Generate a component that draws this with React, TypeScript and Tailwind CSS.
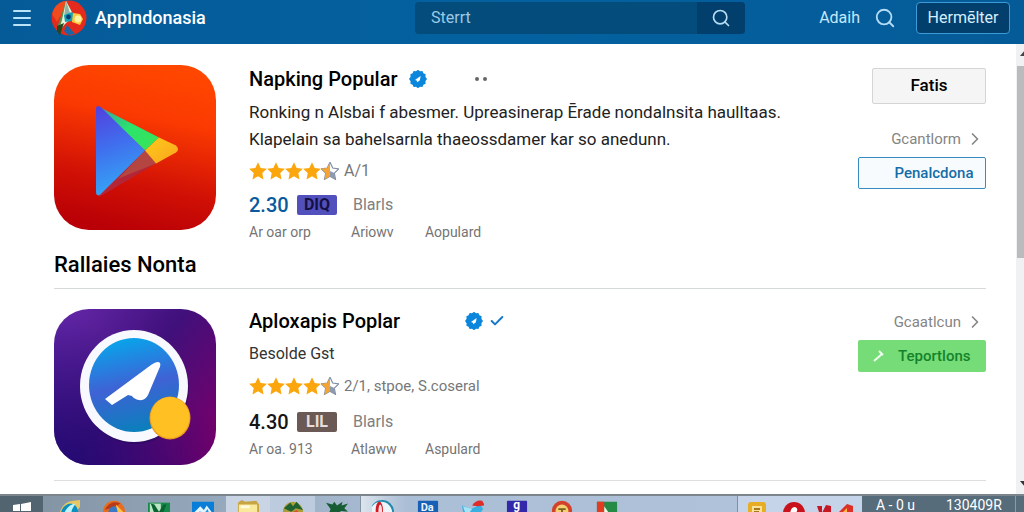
import type { ReactNode } from "react"
import { Check, ChevronRight, Menu, Search } from "lucide-react"

const STAR =
  "M10 1.2l2.7 5.8 6.2.8-4.6 4.3 1.2 6.3L10 15.3l-5.5 3.1 1.2-6.3L1.1 7.8l6.2-.8z"

function Stars() {
  return (
    <div className="flex" role="img" aria-label="4.5">
      {[0, 1, 2, 3].map((i) => (
        <svg key={i} viewBox="1 1 18 18" className="h-[18px] w-[18px]">
          <path d={STAR} fill="#fba60c" />
        </svg>
      ))}
      <svg viewBox="1 1 18 18" className="h-[18px] w-[18px]">
        <path d={STAR} fill="#fff" stroke="#8290a3" strokeWidth="1.2" />
        <path
          d="M10 1.2v14.1l-5.5 3.1 1.2-6.3L1.1 7.8l6.2-.8z"
          fill="#f5a332"
        />
        <path d="M10 10l4.3 2.1 1.2 6.3L10 15.3z" fill="#8d9ab0" />
      </svg>
    </div>
  )
}

function VerifiedBadge() {
  return (
    <svg viewBox="1 1 18 18" className="h-[18px] w-[18px]">
      <path
        d="M10 .8l2 1.4 2.4-.2 1 2.2 2.2 1-.2 2.5L19 10l-1.6 2.3.2 2.5-2.2 1-1 2.2-2.4-.2-2 1.4-2-1.4-2.4.2-1-2.2-2.2-1 .2-2.5L1 10l1.6-2.3-.2-2.5 2.200-1 1-2.2 2.4.2z"
        fill="#0b86dd"
      />
      <path d="M7 11l5.600-4-.7 4.200-2.500 2-.8-1.600z" fill="#fff" />
    </svg>
  )
}

function LogoMark() {
  return (
    <svg viewBox="0 0 36 36" className="h-9 w-9">
      <circle cx="18" cy="18" r="17.5" fill="#e32a1c" />
      <path d="M1 14a17.500 17.500 0 0 1 12-13l4 1-11 20z" fill="#f04a1f" />
      <path d="M15 1l5 10-6 9-8 14 1-9z" fill="#5b8f4a" />
      <path d="M15 1l8 15-9 8-7 9 4-13z" fill="#e9f2dc" />
      <path d="M15 1l4 12-6 5z" fill="#8fb3a5" />
      <path d="M13 15l8-3 3 4-3 5-7 1z" fill="#12a4b4" />
      <circle cx="17.500" cy="17" r="2.400" fill="#063f77" />
      <path d="M22 13l7 1 3 5-3 6-8-3z" fill="#ffc83a" />
      <circle cx="27" cy="19" r="3.400" fill="#fff2a0" />
      <path d="M6 26l7-3-4 12-3-3z" fill="#24491f" />
      <path d="M16 25l8 9-7 1-4-4z" fill="#1766a5" />
    </svg>
  )
}

function PlayArtwork() {
  return (
    <svg
      viewBox="0 0 162 164"
      preserveAspectRatio="none"
      className="h-[165px] w-[162px] shrink-0"
    >
      <defs>
        <linearGradient id="play-bg" x1=".6" y1="0" x2=".4" y2="1">
          <stop offset="0" stopColor="#ff4700" />
          <stop offset=".3" stopColor="#fb3a02" />
          <stop offset=".72" stopColor="#d01005" />
          <stop offset="1" stopColor="#b90006" />
        </linearGradient>
        <linearGradient id="play-blue" x1="0" y1="0" x2=".2" y2="1">
          <stop offset="0" stopColor="#533fdd" />
          <stop offset=".5" stopColor="#3f70ee" />
          <stop offset="1" stopColor="#35a5f5" />
        </linearGradient>
        <linearGradient id="play-green" x1="0" y1="0" x2="1" y2="1">
          <stop offset="0" stopColor="#3e9aa8" />
          <stop offset=".5" stopColor="#2be36d" />
          <stop offset="1" stopColor="#3be453" />
        </linearGradient>
        <linearGradient id="play-yellow" x1="0" y1="0" x2="1" y2="1">
          <stop offset="0" stopColor="#ffca1c" />
          <stop offset="1" stopColor="#f9a51c" />
        </linearGradient>
      </defs>
      <rect width="162" height="164" rx="35" fill="url(#play-bg)" />
      <path d="M44 41l61 31-14 13z" fill="url(#play-green)" />
      <path d="M44 130l47-46 11 14-53 31q-4 3-5 1z" fill="#b42537" />
      <path d="M64 113l27-28 11 13z" fill="#b54540" />
      <path
        d="M42 44q0-5 5-2l44 43-45 44q-4 2-4-3z"
        fill="url(#play-blue)"
      />
      <path
        d="M105 72l17 8q4 4 0 7l-20 11-11-13z"
        fill="url(#play-yellow)"
      />
    </svg>
  )
}

function PlaneArtwork() {
  return (
    <svg
      viewBox="0 0 162 156"
      preserveAspectRatio="none"
      className="h-[156px] w-[162px] shrink-0"
    >
      <defs>
        <linearGradient id="plane-bg" x1="0" y1=".1" x2="1" y2=".8">
          <stop offset="0" stopColor="#6527a9" />
          <stop offset=".5" stopColor="#40107b" />
          <stop offset="1" stopColor="#75006b" />
        </linearGradient>
        <linearGradient id="plane-shade" x1=".6" y1=".4" x2=".1" y2="1">
          <stop offset="0" stopColor="#1e0870" stopOpacity="0" />
          <stop offset="1" stopColor="#1e0870" stopOpacity=".8" />
        </linearGradient>
        <linearGradient id="plane-disc" x1=".4" y1="0" x2=".6" y2="1">
          <stop offset="0" stopColor="#08a4ea" />
          <stop offset=".5" stopColor="#3f62d5" />
          <stop offset="1" stopColor="#0880bb" />
        </linearGradient>
      </defs>
      <rect width="162" height="156" rx="35" fill="url(#plane-bg)" />
      <rect width="162" height="156" rx="35" fill="url(#plane-shade)" />
      <ellipse cx="81" cy="79" rx="54" ry="56" fill="#24095a" opacity=".5" />
      <ellipse cx="80" cy="77" rx="54" ry="56" fill="#f8f9ff" />
      <ellipse cx="80" cy="76" rx="45" ry="47" fill="url(#plane-disc)" />
      <path
        d="M51 90l46-34q7-5 9-2 1 2-1 6L94 86q-3 6-9 5-5-1-7-4l-4-1-16 10z"
        fill="#fff"
      />
      <ellipse cx="116" cy="109" rx="20.500" ry="21.500" fill="#ed9b20" />
      <ellipse cx="116" cy="108.500" rx="19.500" ry="20.500" fill="#ffc024" />
    </svg>
  )
}

interface ScoreProps {
  value: string
  tag: string
  label: string
  meta: string[]
  valueColor: string
  tagColor: string
}

function Score({ value, tag, label, meta, valueColor, tagColor }: ScoreProps) {
  return (
    <>
      <div className="flex h-6 items-center">
        <span className={`w-12 text-xl font-medium ${valueColor}`}>
          {value}
        </span>
        <span
          className={`flex h-5 w-10 items-center justify-center rounded-xs text-base font-bold ${tagColor}`}
        >
          {tag}
        </span>
        <span className="ml-4 text-base text-[#808080]">{label}</span>
      </div>
      <div className="mt-[5px] flex h-5 items-center text-sm text-[#747474]">
        <span className="w-[102px]">{meta[0]}</span>
        <span className="w-[74px]">{meta[1]}</span>
        <span>{meta[2]}</span>
      </div>
    </>
  )
}

function MoreLink({ children }: { children: ReactNode }) {
  return (
    <a href="#" className="flex h-5 items-center text-[15px] text-[#858585]">
      {children}
      <ChevronRight className="ml-1 h-5 w-5" strokeWidth={2} />
    </a>
  )
}

function Header() {
  return (
    <header className="grid h-11 shrink-0 grid-cols-[401fr_330fr_265fr] items-center bg-linear-to-r from-[#055b98] via-[#04619f] to-[#055b98] px-[14px] pb-2 text-white">
      <div className="flex items-center">
        <button aria-label="Menu" className="-ml-1 text-[#b9e3f7]">
          <Menu className="h-6 w-6" strokeWidth={2} />
        </button>
        <a href="#" className="ml-[17px] flex items-center gap-2">
          <LogoMark />
          <span className="text-lg font-medium">AppIndonasia</span>
        </a>
      </div>
      <form className="flex h-8 overflow-hidden rounded-sm bg-[#034c7c]">
        <input
          type="text"
          aria-label="Sterrt"
          placeholder="Sterrt"
          className="min-w-0 flex-1 px-4 text-base placeholder:text-[#9cc9e3]"
        />
        <button
          type="button"
          aria-label="Search"
          className="flex w-12 items-center justify-center bg-[#033f6c] text-[#b5dcf2]"
        >
          <Search className="h-5 w-5" strokeWidth={2} />
        </button>
      </form>
      <div className="flex items-center justify-end">
        <a href="#" className="text-base text-[#c5e7fa]">
          Adaih
        </a>
        <button aria-label="Search" className="mr-5 ml-[14px] text-[#b3dcf5]">
          <Search className="h-[22px] w-[22px]" strokeWidth={2} />
        </button>
        <button className="h-8 w-[94px] rounded-sm border border-[#3b9bd6] bg-[#033f6c] text-base text-[#d4eefc]">
          Hermēlter
        </button>
      </div>
    </header>
  )
}

function ScrollRail() {
  return (
    <div
      aria-hidden="true"
      className="flex w-2 shrink-0 flex-col overflow-hidden bg-[#f0f1f2] pl-px"
    >
      <svg viewBox="0 0 7 22" className="h-[22px] w-[7px]">
        <path d="M3 12l5-6v6z" fill="#444" />
      </svg>
      <div className="h-48 bg-[#babbbc]" />
      <svg viewBox="0 0 7 22" className="mt-auto h-[22px] w-[7px]">
        <path d="M3 9h5v6z" fill="#333" />
      </svg>
    </div>
  )
}

const TASKS = [
  {
    name: "Explorer",
    cell: "",
    art: (
      <>
        <path d="M0 24Q2 3 17 2l7-1q3 5-2 10l-6 9z" fill="#e8c763" />
        <path d="M2 22Q3 6 14 5q9 1 8 15h-7V9l-8 13z" fill="#0b8fbe" />
        <path d="M7 15q4-9 12-10l-8 14z" fill="#bff3fb" />
      </>
    ),
  },
  {
    name: "Firefox",
    cell: "",
    art: (
      <>
        <circle cx="12" cy="14" r="12" fill="#e96c1d" />
        <path d="M2 12Q8 0 19 5l-7 4z" fill="#b83a1b" />
        <circle cx="12" cy="14" r="6" fill="#3b79c7" />
        <path d="M14 6l8 8-4 8z" fill="#ffc341" />
      </>
    ),
  },
  {
    name: "Sheets",
    cell: "",
    art: (
      <>
        <path d="M0 4h24v20H0z" fill="#16894b" />
        <path d="M2 5h12v18H2z" fill="#bce5c6" />
        <path d="M3 5l4 1 5 8 5-8h3l-7 18h-3z" fill="#096331" />
      </>
    ),
  },
  {
    name: "Files",
    cell: "",
    art: (
      <>
        <path d="M0 3h24v21H0z" fill="#087ed8" />
        <path d="M3 14l6-6 4 4 3-5 6 8-4 8H4z" fill="#e4f5ff" />
        <path d="M8 13l5 3 4-5 2 5-7 7z" fill="#2399e6" />
      </>
    ),
  },
  {
    name: "Folder",
    cell: "bg-[#c9d5e4]",
    art: (
      <>
        <path d="M1 4l4-3 4 2 12-1 3 4v18H1z" fill="#c8a442" />
        <path d="M2 6h20v18H2z" fill="#fae89b" />
        <path d="M4 7h10v3H4z" fill="#fffbe0" />
      </>
    ),
  },
  {
    name: "Globe",
    cell: "bg-[#bccbde]",
    art: (
      <>
        <circle cx="12" cy="14" r="11" fill="#ad9d39" />
        <path d="M2 10l7-6 3 4 4-5 7 9-8-2-5 4z" fill="#216330" />
        <path d="M10 15l6-3 5 6H8z" fill="#d8552b" />
      </>
    ),
  },
  {
    name: "Leaf",
    cell: "",
    art: (
      <path
        d="M0 4l7 2 2-3 3 4 6-4-1 4 7-2-4 5 4 4-8-1-3 9-4-8-6 2 2-5z"
        fill="#175d34"
      />
    ),
  },
  {
    name: "Opera",
    cell: "bg-linear-to-r from-[#dbe5ee] to-transparent border-l border-[#8393a5]",
    art: (
      <>
        <circle cx="11" cy="14" r="13" fill="#238aad" />
        <circle cx="10" cy="15" r="12" fill="#edf5f8" />
        <ellipse cx="8" cy="12" rx="4" ry="9" fill="#d01b25" />
        <ellipse cx="9" cy="13" rx="2" ry="7" fill="#f9dce0" />
      </>
    ),
  },
  {
    name: "Documents",
    cell: "",
    art: (
      <>
        <rect x="1" y="2" width="22" height="24" rx="1" fill="#1660b5" />
        <text x="4" y="13" fontSize="12" fontWeight="700" fill="#e8f3fc">
          Da
        </text>
      </>
    ),
  },
  {
    name: "Mail",
    cell: "",
    art: (
      <>
        <path d="M0 7l10 4 10-5 3 5-9 13H3z" fill="#37afe1" />
        <path d="M1 8l10 3-6 8z" fill="#a5e3f8" />
        <path d="M11 7q5-7 11-5l3 5-8 1z" fill="#dd2c29" />
      </>
    ),
  },
  {
    name: "Reader",
    cell: "",
    art: (
      <>
        <rect x="1" y="2" width="22" height="24" rx="1" fill="#3428aa" />
        <text x="8" y="11" fontSize="13" fontWeight="700" fill="#fff">
          g
        </text>
      </>
    ),
  },
  {
    name: "Camera",
    cell: "",
    art: (
      <>
        <circle cx="12" cy="13" r="11" fill="#d4412b" />
        <circle cx="12" cy="13" r="7" fill="#f4d071" />
        <path d="M8 10h8v2h-3v4h-2v-4H8z" fill="#7a5d21" />
      </>
    ),
  },
  {
    name: "Player",
    cell: "",
    art: (
      <>
        <path d="M1 3h22v21H1z" fill="#238b46" />
        <path d="M1 3h8v21H1z" fill="#e13b22" />
        <path d="M9 8l7 10H9z" fill="#f3f8e7" />
      </>
    ),
  },
]

function Taskbar() {
  return (
    <footer className="flex h-[18px] shrink-0 items-start overflow-hidden border-t-2 border-[#7d858c] bg-linear-to-r from-[#7f909f] via-[#aabed6] via-40% to-[#b3c5dc]">
      <div className="flex h-10 w-[43px] shrink-0 justify-center bg-[#52646f]">
        <button aria-label="Start" className="flex h-10 items-start pt-[6px]">
          <svg viewBox="0 0 20 18" className="h-[18px] w-5">
            <path
              d="M1 3l7-1v7H1zM9 2l10-2v9H9zM1 10h7v7l-7-1zM9 10h10v8L9 17z"
              fill="#fff"
            />
          </svg>
        </button>
      </div>
      <nav className="ml-1 flex h-10 w-[582px] shrink-0">
        {TASKS.map((task) => (
          <button
            key={task.name}
            aria-label={task.name}
            className={`flex flex-1 justify-center pt-[3px] ${task.cell}`}
          >
            <svg viewBox="0 0 24 24" className="h-[22px] w-[22px]">
              {task.art}
            </svg>
          </button>
        ))}
      </nav>
      <div className="ml-auto flex h-10 w-[125px] shrink-0 border-l border-[#8192a6] bg-[#c5d4e8] pt-[6px] pl-[10px]">
        <svg viewBox="0 0 110 20" className="h-5 w-[110px]">
          <rect width="18" height="20" rx="3" fill="#e7ae25" />
          <path d="M4 4h10v12H4z" fill="#fae29a" />
          <path d="M6 6h6v2H6zM6 9h5v2H6z" fill="#a67a18" />
          <circle cx="46" cy="11" r="11" fill="#c9121c" />
          <path d="M42 14q0-9 5-9 4 1 1 6l4 5z" fill="#fff" />
          <path d="M69 4h5v7l4-8 5 1v16h-5v-7l-4 6z" fill="#c51724" />
          <path d="M90 11l9-9 6 2v16H94z" fill="#dd3127" />
          <path d="M95 10l4-4v6z" fill="#ffbc43" />
        </svg>
      </div>
      <div className="flex h-10 w-[162px] shrink-0 bg-[#566c7b] pt-[3px] pl-[14px] text-sm leading-3 text-white">
        <span className="w-[70px]">A - 0 u</span>
        <time>130409R</time>
        <span className="-mt-[3px] mr-2 ml-auto w-px bg-[#8b9ca8]" />
      </div>
    </footer>
  )
}

export default function App() {
  return (
    <div className="flex h-screen flex-col overflow-hidden bg-white font-[Roboto,sans-serif] text-black">
      <Header />
      <div className="flex min-h-0 flex-1">
        <main className="min-w-0 flex-1 overflow-hidden pt-[21px] pr-[30px] pl-[54px]">
          <article className="flex">
            <PlayArtwork />
            <div className="ml-[33px] min-w-0 flex-1">
              <div className="flex h-7 items-center">
                <h2 className="text-xl font-medium">Napking Popular</h2>
                <span className="ml-3">
                  <VerifiedBadge />
                </span>
                <button
                  aria-label="More"
                  className="ml-12 flex gap-1 text-[#666]"
                >
                  <span className="h-1 w-1 rounded-full bg-current" />
                  <span className="h-1 w-1 rounded-full bg-current" />
                </button>
              </div>
              <p className="mt-[6px] text-[17px] leading-[27px] whitespace-nowrap text-[#222]">
                Ronking n Alsbai f abesmer. Upreasinerap Ērade nondalnsita
                haulltaas.
                <br />
                Klapelain sa bahelsarnla thaeossdamer kar so anedunn.
              </p>
              <div className="mt-[6px] mb-[10px] flex h-6 items-center gap-[5px] text-base text-[#777]">
                <Stars />
                <span>A/1</span>
              </div>
              <Score
                value="2.30"
                tag="DIQ"
                label="Blarls"
                meta={["Ar oar orp", "Ariowv", "Aopulard"]}
                valueColor="text-[#085a9d]"
                tagColor="bg-[#5150bd] text-[#151044]"
              />
            </div>
            <div className="flex w-32 shrink-0 flex-col items-end pt-[3px]">
              <button className="h-9 w-[114px] rounded-xs border border-[#d5d5d5] bg-[#f5f5f5] text-[17px] font-medium">
                Fatis
              </button>
              <div className="mt-[25px] mb-2 pr-px">
                <MoreLink>Gcantlorm</MoreLink>
              </div>
              <button className="h-8 w-32 rounded-xs border border-[#388bc0] bg-[#f8fbfd] pl-6 text-[15px] font-medium text-[#146da9]">
                Penalcdona
              </button>
            </div>
          </article>

          <h2 className="mt-[9px] mb-5 border-b border-[#d6dadb] pb-[9px] text-[22px] leading-7 font-medium">
            Rallaies Nonta
          </h2>

          <article className="flex border-b border-[#dedede] pb-[15px]">
            <PlaneArtwork />
            <div className="ml-[33px] min-w-0 flex-1">
              <div className="flex h-6 items-center">
                <h2 className="w-[216px] text-xl font-medium">
                  Aploxapis Poplar
                </h2>
                <VerifiedBadge />
                <Check
                  className="ml-[6px] h-4 w-4 text-[#1678c8]"
                  strokeWidth={3}
                />
              </div>
              <p className="mt-[11px] text-base leading-5 text-[#333]">
                Besolde Gst
              </p>
              <div className="mt-[10px] mb-3 flex h-6 items-center gap-[5px] text-[15px] text-[#777]">
                <Stars />
                <span>2/1, stpoe, S.coseral</span>
              </div>
              <Score
                value="4.30"
                tag="LIL"
                label="Blarls"
                meta={["Ar oa. 913", "Atlaww", "Aspulard"]}
                valueColor="text-[#161616]"
                tagColor="bg-[#6b5955] text-[#e8ddda]"
              />
            </div>
            <div className="flex w-32 shrink-0 flex-col items-end pt-[3px]">
              <div className="mb-2 pr-px">
                <MoreLink>Gcaatlcun</MoreLink>
              </div>
              <button className="flex h-8 w-32 items-center rounded-xs bg-[#76dc78] pl-[14px] text-[15px] font-medium text-[#13832b]">
                <svg viewBox="0 0 14 14" className="mr-3 h-[14px] w-[14px]">
                  <path
                    d="M2 12l8-7M7 2l4 4"
                    fill="none"
                    stroke="#edffed"
                    strokeWidth="2"
                  />
                </svg>
                Teportlons
              </button>
            </div>
          </article>
        </main>
        <ScrollRail />
      </div>
      <Taskbar />
    </div>
  )
}
